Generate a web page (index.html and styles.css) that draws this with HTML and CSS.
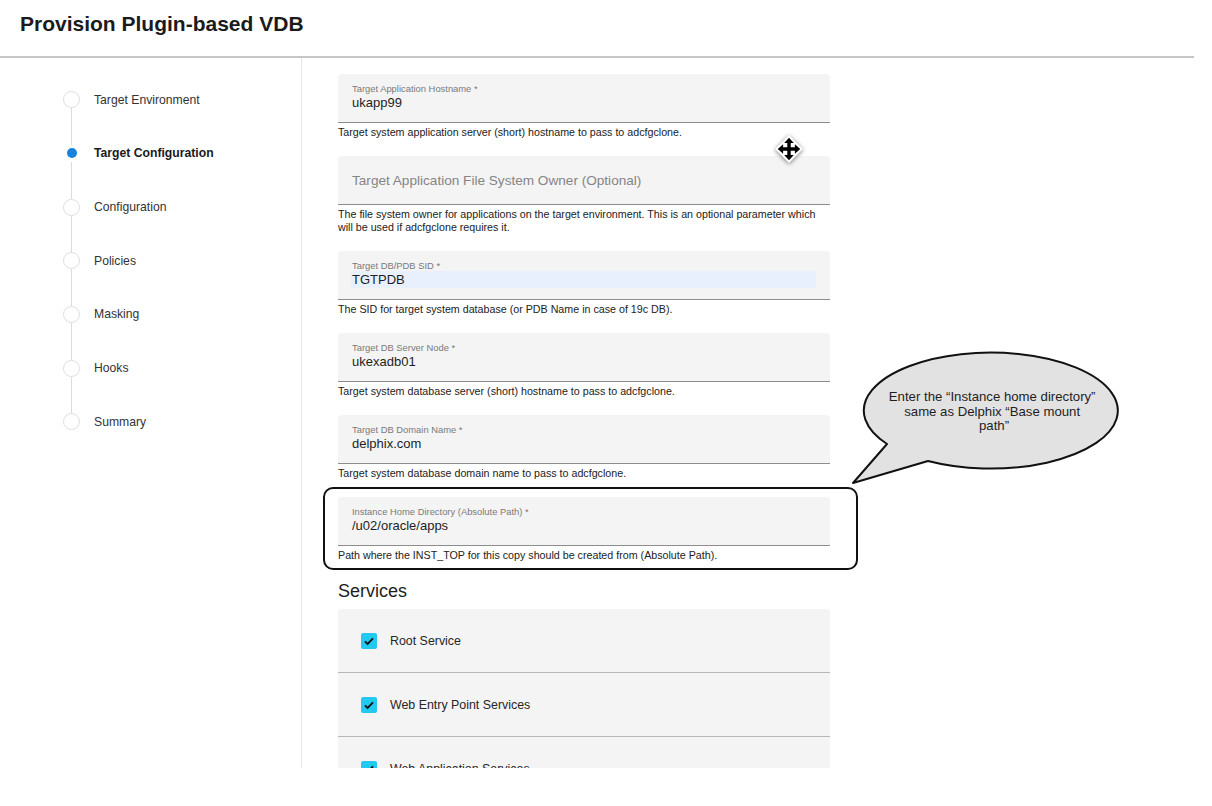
FILE: index.html
```html
<!DOCTYPE html>
<html lang="en">
<head>
    <meta charset="UTF-8">
    <meta name="viewport" content="width=device-width, initial-scale=1.0">
    <title>Provision Plugin-based VDB</title>

    <link rel="stylesheet" href="styles.css">

</head>
<body>
<div class="page">

    <header class="topbar">
        <h1>Provision Plugin-based VDB</h1>
    </header>

    <div class="layout">
        <aside class="steps">
            <ol>
                <li class="step"><span class="dot"></span><span class="step-name">Target Environment</span></li>
                <li class="step active"><span class="dot"></span><span class="step-name">Target Configuration</span></li>
                <li class="step"><span class="dot"></span><span class="step-name">Configuration</span></li>
                <li class="step"><span class="dot"></span><span class="step-name">Policies</span></li>
                <li class="step"><span class="dot"></span><span class="step-name">Masking</span></li>
                <li class="step"><span class="dot"></span><span class="step-name">Hooks</span></li>
                <li class="step"><span class="dot"></span><span class="step-name">Summary</span></li>
            </ol>
        </aside>

        <main class="form">
            <div class="field">
                <div class="field-label">Target Application Hostname *</div>
                <div class="field-value">ukapp99</div>
            </div>
            <p class="hint">Target system application server (short) hostname to pass to adcfgclone.</p>

            <div class="field empty">
                <div class="placeholder">Target Application File System Owner (Optional)</div>
            </div>
            <p class="hint">The file system owner for applications on the target environment. This is an optional parameter which will be used if adcfgclone requires it.</p>

            <div class="field">
                <div class="field-label">Target DB/PDB SID *</div>
                <div class="field-value autofill">TGTPDB</div>
            </div>
            <p class="hint">The SID for target system database (or PDB Name in case of 19c DB).</p>

            <div class="field">
                <div class="field-label">Target DB Server Node *</div>
                <div class="field-value">ukexadb01</div>
            </div>
            <p class="hint">Target system database server (short) hostname to pass to adcfgclone.</p>

            <div class="field">
                <div class="field-label">Target DB Domain Name *</div>
                <div class="field-value">delphix.com</div>
            </div>
            <p class="hint">Target system database domain name to pass to adcfgclone.</p>

            <div class="annotated">
                <div class="field">
                    <div class="field-label">Instance Home Directory (Absolute Path) *</div>
                    <div class="field-value">/u02/oracle/apps</div>
                </div>
                <p class="hint">Path where the INST_TOP for this copy should be created from (Absolute Path).</p>
                <div class="callout-frame"></div>
            </div>

            <h2 class="section-title">Services</h2>
            <div class="services">
                <label class="service"><span class="check"><svg viewBox="0 0 16 16" width="16" height="16"><path d="M4 8.3l2.6 2.6L12 5.4" fill="none" stroke="#111" stroke-width="1.9"/></svg></span>Root Service</label>
                <label class="service"><span class="check"><svg viewBox="0 0 16 16" width="16" height="16"><path d="M4 8.3l2.6 2.6L12 5.4" fill="none" stroke="#111" stroke-width="1.9"/></svg></span>Web Entry Point Services</label>
                <label class="service"><span class="check"><svg viewBox="0 0 16 16" width="16" height="16"><path d="M4 8.3l2.6 2.6L12 5.4" fill="none" stroke="#111" stroke-width="1.9"/></svg></span>Web Application Services</label>
            </div>
        </main>
    </div>

    <!-- annotation bubble -->
    <svg class="bubble" width="285" height="145" viewBox="845 345 285 145">
        <path d="M887 444 L853 483 L928 461 A127 58 0 1 0 887 444 Z" fill="#e2e2e2" stroke="#111" stroke-width="2" stroke-linejoin="round"/>
        <text x="994" y="401" text-anchor="middle">
            <tspan x="994">Enter the “Instance home directory”</tspan>
            <tspan x="994" dy="14.5">same as Delphix “Base mount</tspan>
            <tspan x="994" dy="14.5">path”</tspan>
        </text>
    </svg>

    <svg class="move-cursor" width="30" height="30" viewBox="0 0 28 28">
        <polygon points="14,1 27,14 14,27 1,14" fill="#fff"/>
        <path d="M14 3.5L18.5 8.5H15.6V12.4H19.5V9.5L24.5 14L19.5 18.5V15.6H15.6V19.5H18.5L14 24.5L9.5 19.5H12.4V15.6H8.5V18.5L3.5 14L8.5 9.5V12.4H12.4V8.5H9.5Z" fill="#000"/>
    </svg>

</div>
</body>
</html>
```

FILE: styles.css
```css
*{padding: 0px; margin: 0px; box-sizing: border-box;}
ul, li, ol{list-style: none;}
body{font-family: "Liberation Sans", Arial, sans-serif; color: #222; background: #fff;}

.page{position: relative; width: 1212px; height: 806px; overflow: hidden;}

.topbar{width: 1194px; height: 58px; border-bottom: 2px solid #c6c6c6; padding: 12px 20px 0;}
.topbar h1{font-size: 21px; line-height: 24px; font-weight: bold; color: #1b1b1b;}

.layout{display: flex; width: 1194px; height: 710px; overflow: hidden;}

/* stepper */
.steps{flex: none; width: 302px; border-right: 1px solid #e6e6e6; padding: 15px 0 0 63px;}
.step{position: relative; display: flex; align-items: center; height: 53.67px; gap: 14px; font-size: 12.2px; color: #333;}
.step .dot{flex: none; width: 17px; height: 17px; border-radius: 50%; border: 1px solid #dedede; background: #fff; display: flex; align-items: center; justify-content: center;}
.step::after{content: ""; position: absolute; left: 8px; top: calc(50% + 8.5px); width: 1px; height: 36.67px; background: #dcdcdc;}
.step:last-child::after{display: none;}
.step.active .dot{border-color: #fff;}
.step.active .dot::before{content: ""; width: 10px; height: 10px; border-radius: 50%; background: #1a82dc;}
.step.active .step-name{font-weight: bold; color: #1a1a1a;}

/* form */
.form{flex: none; width: 492px; margin-left: 36px; padding-top: 16px;}
.field{height: 49px; background: #f4f4f4; border-radius: 4px 4px 0 0; border-bottom: 1px solid #8d8d8d; padding: 9px 14px 0 13px;}
.field-label{font-size: 9.4px; line-height: 11px; color: #7a7a7a; padding-left: 1px;}
.field-value{font-size: 13px; line-height: 17px; color: #1e1e1e; padding-left: 1px;}
.field-value.autofill{background: #e8f0fe;}
.field.empty{display: flex; align-items: center; padding-top: 0;}
.placeholder{font-size: 13.6px; color: #858585; padding-left: 1px;}
.hint{font-size: 10.7px; line-height: 13px; padding-top: 3px; margin-bottom: 17px; color: #222;}

.annotated{position: relative;}
.callout-frame{position: absolute; left: -15px; top: -10px; width: 535px; height: 83px; border: 2px solid #111; border-radius: 10px; pointer-events: none;}
.annotated .hint{margin-bottom: 18px;}

.section-title{font-size: 18px; line-height: 22px; font-weight: normal; color: #1e1e1e; margin-bottom: 7px;}
.services{background: #f4f4f4; border-radius: 4px;}
.service{display: flex; align-items: center; gap: 13px; height: 64px; padding-left: 23px; border-bottom: 1px solid #b8b8b8; font-size: 12.4px; color: #262626;}
.check{flex: none; width: 16px; height: 16px; border-radius: 2px; background: #22c9f0; display: flex;}

/* overlays */
.bubble{position: absolute; left: 845px; top: 345px;}
.bubble text{font-family: "Liberation Sans", Arial, sans-serif; font-size: 13.2px; fill: #1e1e1e;}
.move-cursor{position: absolute; left: 774px; top: 134px; filter: drop-shadow(0 1px 2px rgba(0,0,0,0.5));}
```
